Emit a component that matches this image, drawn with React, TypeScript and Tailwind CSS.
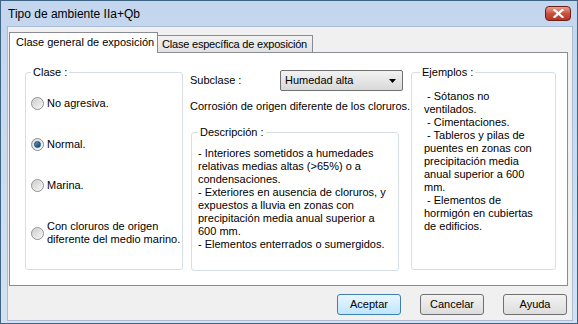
import React from 'react';

const Radio: React.FC<{ checked?: boolean }> = ({ checked }) => (
  <div className="w-[13px] h-[13px] shrink-0 rounded-full border border-[#8e8f8f] bg-gradient-to-br from-[#d6d6d6] to-[#fbfbfb] flex items-center justify-center">
    {checked ? (
      <div className="w-[7px] h-[7px] rounded-full bg-gradient-to-br from-[#5aa0cf] to-[#0f3f6b] border border-[#1c4c73]" />
    ) : (
      <div className="w-[9px] h-[9px] rounded-full bg-gradient-to-br from-[#cfcfcf] to-[#f4f4f4]" />
    )}
  </div>
);

const Button: React.FC<{ label: string; focused?: boolean }> = ({ label, focused }) => (
  <div
    className={`w-[64px] h-[21px] rounded-[3px] border flex items-center justify-center text-[11px] ${
      focused
        ? 'border-[#3c7fb1] bg-gradient-to-b from-[#eaf6fd] to-[#bee6fd]'
        : 'border-[#707070] bg-gradient-to-b from-[#f2f2f2] to-[#dddddd]'
    }`}
  >
    {label}
  </div>
);

const App: React.FC = () => {
  const clases = [
    { label: ['No agresiva.'] },
    { label: ['Normal.'], checked: true },
    { label: ['Marina.'] },
    { label: ['Con cloruros de origen', 'diferente del medio marino.'] },
  ];

  const descripcion = [
    '- Interiores sometidos a humedades',
    'relativas medias altas (>65%) o a',
    'condensaciones.',
    '- Exteriores en ausencia de cloruros, y',
    'expuestos a lluvia en zonas con',
    'precipitación media anual superior a',
    '600 mm.',
    '- Elementos enterrados o sumergidos.',
  ];

  const ejemplos = [
    ' - Sótanos no',
    'ventilados.',
    ' - Cimentaciones.',
    ' - Tableros y pilas de',
    'puentes en zonas con',
    'precipitación media',
    'anual superior a 600',
    'mm.',
    ' - Elementos de',
    'hormigón en cubiertas',
    'de edificios.',
  ];

  return (
    <div className="w-[578px] h-[324px] flex flex-col bg-gradient-to-b from-[#c3d6ee] to-[#d3e1f1] border border-[#3f6585] font-['Liberation_Sans',Arial,sans-serif] text-black">
      {/* title bar */}
      <div className="h-[25px] shrink-0 flex items-center justify-between pl-[7px] pr-[6px]">
        <span className="text-[12px]">Tipo de ambiente IIa+Qb</span>
        <div className="w-[26px] h-[15px] rounded-[4px] border border-[#6b1f1a] bg-gradient-to-b from-[#e8a293] via-[#c9523f] to-[#b8331f] flex items-center justify-center">
          <svg width="11" height="9" viewBox="0 0 11 9">
            <path d="M1.5 1 L9.5 8 M9.5 1 L1.5 8" stroke="#ffffff" strokeWidth="2.2" strokeLinecap="square" />
          </svg>
        </div>
      </div>

      {/* client area */}
      <div className="flex-1 ml-[6px] mr-[4px] mb-[2px] bg-[#f0f0f0] border border-[#a8bdd3] flex flex-col text-[11px] leading-[13px] whitespace-nowrap">
        {/* tabs */}
        <div className="flex items-end pl-[1px] pt-[3px] h-[25px]">
          <div className="w-[149px] h-[21px] border border-b-0 border-[#898c95] bg-white flex items-center pl-[6px] pb-[2px] -mb-px relative z-10">
            Clase general de exposición
          </div>
          <div className="w-[155px] h-[17px] border border-l-0 border-b-0 border-[#898c95] bg-gradient-to-b from-[#f2f2f2] to-[#e1e1e1] flex items-center pl-[4px] tracking-[-0.2px]">
            Clase específica de exposición
          </div>
        </div>

        {/* panel */}
        <div className="ml-[1px] w-[559px] h-[234px] border border-[#898c95] bg-white flex items-start pt-[13px] pl-[15px]">
          {/* Clase */}
          <fieldset className="w-[158px] h-[204px] border border-[#d5dfe5] rounded-[3px] pl-[5px]">
            <legend className="px-[2px]">Clase :</legend>
            <div className="flex flex-col gap-[28px] pt-[18px]">
              {clases.map((c) => (
                <div key={c.label[0]} className="flex items-center gap-[3px]">
                  <Radio checked={c.checked} />
                  <div>
                    {c.label.map((l) => (
                      <div key={l}>{l}</div>
                    ))}
                  </div>
                </div>
              ))}
            </div>
          </fieldset>

          {/* middle */}
          <div className="ml-[7px] w-[214px] flex flex-col">
            <div className="mt-[4px] h-[21px] flex items-center">
              <span className="w-[90px]">Subclase :</span>
              <div className="w-[123px] h-[21px] border border-[#707070] rounded-[2px] bg-gradient-to-b from-[#f2f2f2] to-[#d9d9d9] flex items-center justify-between pl-[4px] pr-[6px]">
                <span>Humedad alta</span>
                <svg width="7" height="4" viewBox="0 0 7 4">
                  <path d="M0 0 H7 L3.5 4 Z" fill="#000000" />
                </svg>
              </div>
            </div>
            <div className="mt-[9px]">Corrosión de origen diferente de los cloruros.</div>
            <fieldset className="ml-[1px] mt-[13px] w-[208px] h-[145px] border border-[#d5dfe5] rounded-[3px] pl-[6px]">
              <legend className="px-[2px]">Descripción :</legend>
              <div className="pt-[8px]">
                {descripcion.map((l) => (
                  <div key={l}>{l}</div>
                ))}
              </div>
            </fieldset>
          </div>

          {/* Ejemplos */}
          <fieldset className="ml-[7px] w-[145px] h-[204px] border border-[#d5dfe5] rounded-[3px] pl-[8px]">
            <legend className="px-[2px]">Ejemplos :</legend>
            <div className="pt-[11px] pl-[4px] whitespace-pre">
              {ejemplos.map((l) => (
                <div key={l}>{l}</div>
              ))}
            </div>
          </fieldset>
        </div>

        {/* buttons */}
        <div className="mt-[8px] flex justify-end gap-[19px] pr-[5px]">
          <Button label="Aceptar" focused />
          <Button label="Cancelar" />
          <Button label="Ayuda" />
        </div>
      </div>
    </div>
  );
};

export default App;
